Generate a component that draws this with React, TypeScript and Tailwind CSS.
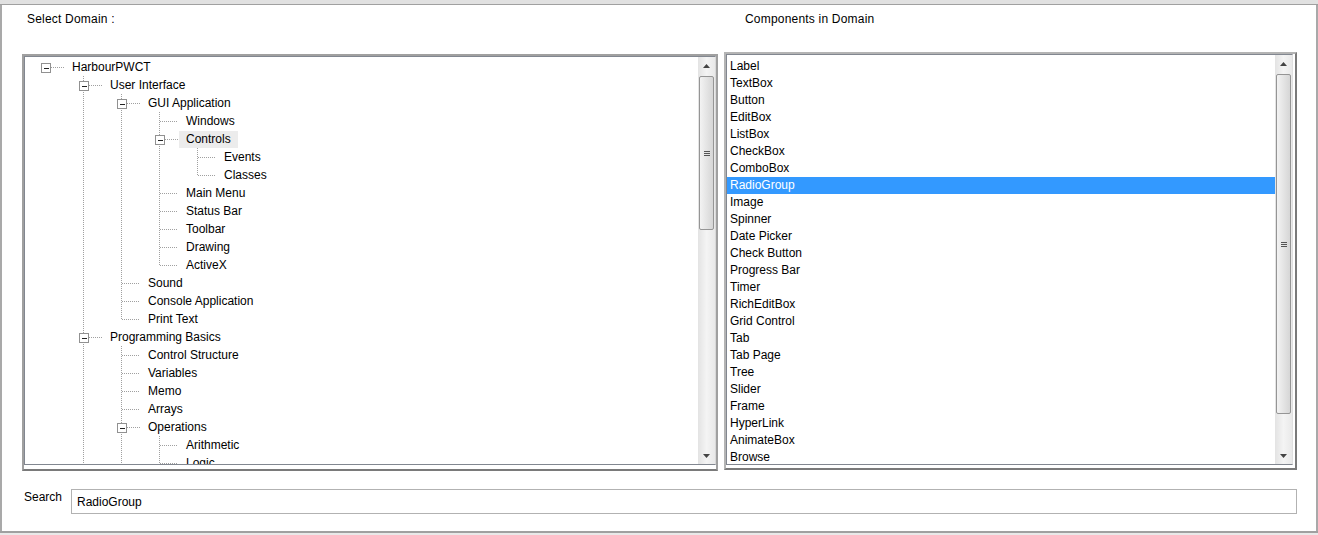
import React from 'react'

type Node = { level: number; label: string; open?: boolean; hot?: boolean }

const tree: Node[] = [
  { level: 0, label: 'HarbourPWCT', open: true },
  { level: 1, label: 'User Interface', open: true },
  { level: 2, label: 'GUI Application', open: true },
  { level: 3, label: 'Windows' },
  { level: 3, label: 'Controls', open: true, hot: true },
  { level: 4, label: 'Events' },
  { level: 4, label: 'Classes' },
  { level: 3, label: 'Main Menu' },
  { level: 3, label: 'Status Bar' },
  { level: 3, label: 'Toolbar' },
  { level: 3, label: 'Drawing' },
  { level: 3, label: 'ActiveX' },
  { level: 2, label: 'Sound' },
  { level: 2, label: 'Console Application' },
  { level: 2, label: 'Print Text' },
  { level: 1, label: 'Programming Basics', open: true },
  { level: 2, label: 'Control Structure' },
  { level: 2, label: 'Variables' },
  { level: 2, label: 'Memo' },
  { level: 2, label: 'Arrays' },
  { level: 2, label: 'Operations', open: true },
  { level: 3, label: 'Arithmetic' },
  { level: 3, label: 'Logic' },
  { level: 3, label: 'Comparison' },
  { level: 2, label: 'Functions' },
  { level: 1, label: 'Data Files' },
]

const components = [
  'Label', 'TextBox', 'Button', 'EditBox', 'ListBox', 'CheckBox', 'ComboBox', 'RadioGroup',
  'Image', 'Spinner', 'Date Picker', 'Check Button', 'Progress Bar', 'Timer', 'RichEditBox',
  'Grid Control', 'Tab', 'Tab Page', 'Tree', 'Slider', 'Frame', 'HyperLink', 'AnimateBox', 'Browse',
]

const ROW = 18
const cx = (l: number) => 19 + 38 * l

function hasNext(i: number) {
  const lv = tree[i].level
  for (let j = i + 1; j < tree.length; j++) {
    if (tree[j].level < lv) return false
    if (tree[j].level === lv) return true
  }
  return false
}

function ancestorHasNext(i: number, l: number) {
  for (let j = i - 1; j >= 0; j--) {
    if (tree[j].level === l) return hasNext(j)
    if (tree[j].level < l) return false
  }
  return false
}

function Guides({ i }: { i: number }) {
  const node = tree[i]
  const L = node.level
  const w = cx(L) + 20
  const dot = { stroke: '#a0a0a0', strokeWidth: 1, strokeDasharray: '1 1' }
  const verticals = []
  for (let l = 1; l < L; l++) {
    if (ancestorHasNext(i, l))
      verticals.push(<line key={l} x1={cx(l) + 0.5} y1={0} x2={cx(l) + 0.5} y2={ROW} {...dot} />)
  }
  const c = cx(L)
  return (
    <svg width={w} height={ROW} className="shrink-0">
      {verticals}
      {L > 0 && <line x1={c + 0.5} y1={0} x2={c + 0.5} y2={hasNext(i) ? ROW : 9} {...dot} />}
      <line x1={node.open ? c + 6 : c + 1} y1={9.5} x2={c + 19} y2={9.5} {...dot} />
      {node.open && (
        <g>
          <rect x={c - 3.5} y={5.5} width={9} height={9} fill="#fff" stroke="#919191" />
          <line x1={c - 1} y1={10.5} x2={c + 4} y2={10.5} stroke="#222" />
        </g>
      )}
    </svg>
  )
}

function ScrollBar({ thumbTop, thumbHeight }: { thumbTop: number; thumbHeight: number }) {
  return (
    <div className="flex h-full w-[17px] shrink-0 flex-col bg-linear-to-r from-[#e3e3e3] via-[#f4f4f4] to-[#e9e9e9]">
      <div className="flex h-[17px] items-center justify-center">
        <svg width="7" height="4"><path d="M0 4 L3.5 0 L7 4 Z" fill="#444" /></svg>
      </div>
      <div className="flex-1">
        <div
          className="mx-[1px] flex items-center justify-center rounded-[2px] border border-[#959595] bg-linear-to-r from-[#f3f3f3] to-[#d6d6d6]"
          style={{ marginTop: thumbTop, height: thumbHeight }}
        >
          <div className="flex flex-col gap-[1px]">
            <div className="h-[1px] w-[6px] bg-[#555]" />
            <div className="h-[1px] w-[6px] bg-[#555]" />
            <div className="h-[1px] w-[6px] bg-[#555]" />
          </div>
        </div>
      </div>
      <div className="flex h-[17px] items-center justify-center">
        <svg width="7" height="4"><path d="M0 0 L7 0 L3.5 4 Z" fill="#444" /></svg>
      </div>
    </div>
  )
}

export default function App() {
  return (
    <div className="flex h-[535px] w-[1318px] flex-col overflow-hidden bg-white font-['Liberation_Sans',Arial,sans-serif] text-[12px] leading-[14px] text-black">
      <div className="h-[5px] shrink-0 border-b border-[#a0a0a0] bg-[#e1e1e1]" />
      <div className="flex flex-1 flex-col border-x-2 border-[#a9a9a9]">
        <div className="flex h-[47px] shrink-0 pt-[7px] tracking-[0.2px]">
          <div className="w-[718px] pl-[25px]">Select Domain :</div>
          <div className="pl-[25px]">Components in Domain</div>
        </div>

        <div className="flex h-[419px] shrink-0">
          <div className="ml-[20px] mt-[2px] flex h-[417px] w-[696px] flex-col border-2 border-[#a0a0a0] border-b-[#7a7a7a] pb-[4px]">
            <div className="flex min-h-0 flex-1 border border-[#828790] border-r-[#d9d9d9] border-b-[#828790]">
              <div className="min-w-0 flex-1 overflow-hidden pl-[1px] pt-[1px]">
                {tree.map((n, i) => (
                  <div key={n.label} className="flex h-[18px] items-center">
                    <Guides i={i} />
                    <span className={n.hot ? 'bg-[#ececec] px-[7px] leading-[17px]' : 'px-[7px]'}>
                      {n.label}
                    </span>
                  </div>
                ))}
              </div>
              <ScrollBar thumbTop={2} thumbHeight={154} />
            </div>
          </div>

          <div className="ml-[6px] flex h-[418px] w-[573px] flex-col border-2 border-[#b4b4b4] border-b-[#7a7a7a] border-r-[#7a7a7a] pb-[3px] pr-[2px]">
            <div className="flex min-h-0 flex-1 border border-[#828790] border-r-[#e0e0e0]">
              <div className="min-w-0 flex-1 overflow-hidden pt-[3px]">
                {components.map((c) => (
                  <div
                    key={c}
                    className={
                      c === 'RadioGroup'
                        ? 'h-[17px] bg-[#3399ff] pl-[3px] leading-[17px] text-white'
                        : 'h-[17px] pl-[3px] leading-[17px]'
                    }
                  >
                    {c}
                  </div>
                ))}
              </div>
              <ScrollBar thumbTop={2} thumbHeight={340} />
            </div>
          </div>
        </div>

        <div className="flex flex-1 items-start">
          <div className="ml-[22px] mt-[19px] w-[47px]">Search</div>
          <div className="mt-[18px] flex h-[25px] w-[1226px] items-center border border-[#b2b2b2] px-[5px]">
            RadioGroup
          </div>
        </div>
      </div>
      <div className="h-[2px] shrink-0 bg-[#a0a0a0]" />
      <div className="h-[2px] shrink-0 bg-[#e9e9e9]" />
    </div>
  )
}
